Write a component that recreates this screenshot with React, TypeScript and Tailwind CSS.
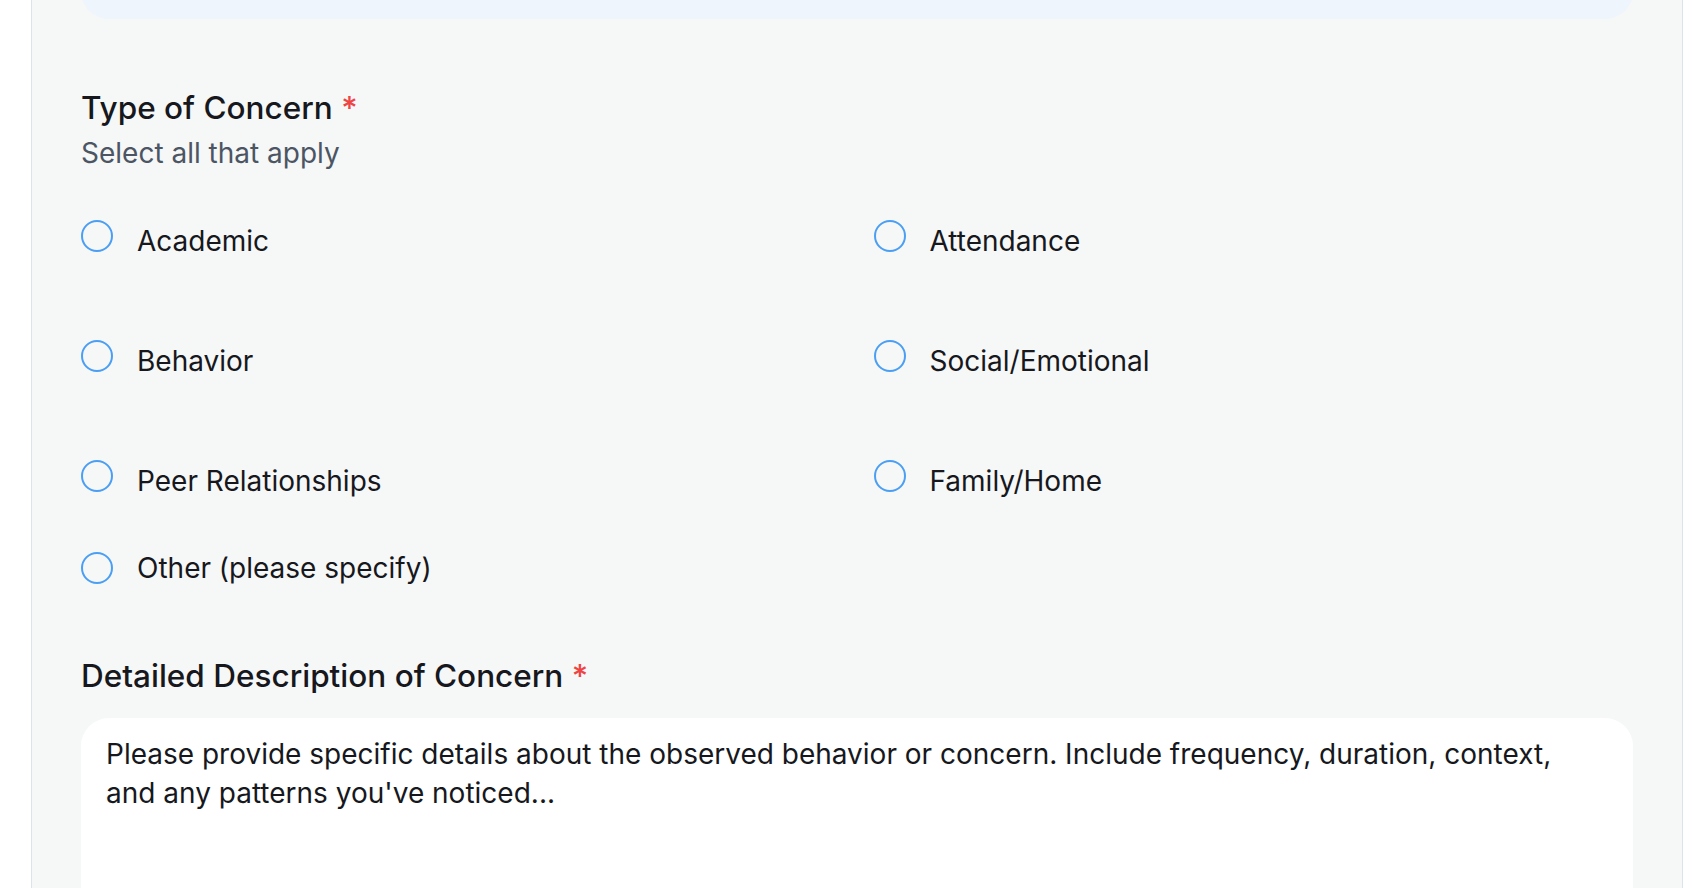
import { useState } from "react";

const OPTIONS: string[] = [
  "Academic",
  "Attendance",
  "Behavior",
  "Social/Emotional",
  "Peer Relationships",
  "Family/Home",
];

function Radio({ checked }: { checked: boolean }) {
  return (
    <span
      className={
        "block w-[32px] h-[32px] shrink-0 rounded-full border-2 border-[#4a9ff5] " +
        (checked ? "bg-[#4a9ff5]" : "bg-transparent")
      }
    />
  );
}

export default function App() {
  const [picked, setPicked] = useState<string[]>([]);

  const toggle = (name: string) =>
    setPicked((p) => (p.includes(name) ? p.filter((x) => x !== name) : [...p, name]));

  return (
    <div
      className="w-full h-[888px] bg-white flex overflow-hidden text-[#16181d]"
      style={{ fontFamily: "Inter, 'Noto Sans', sans-serif" }}
    >
      <div className="ml-[31px] w-[1652px] h-[888px] shrink-0 border-x border-[#dde3ea] bg-[#f6f7f7] px-[49px] overflow-hidden">
        {/* previous section (scrolled out of view) */}
        <div className="h-[120px] -mt-[101px] rounded-[28px] bg-[#eef5fd]" />

        {/* Type of Concern */}
        <div className="mt-[69px]">
          <h3 className="text-[31.5px] leading-[40px] font-medium">
            Type of Concern <span className="text-[#ef4444]">*</span>
          </h3>
          <p className="mt-[7px] text-[28px] leading-[36px] text-[#4b5563]">
            Select all that apply
          </p>
        </div>

        <div className="mt-[49px] grid grid-cols-2 gap-x-[33px] gap-y-[79px]">
          {OPTIONS.map((o) => (
            <label
              key={o}
              className="flex items-start gap-[24px] cursor-pointer"
              onClick={() => toggle(o)}
            >
              <Radio checked={picked.includes(o)} />
              <span className="mt-[1px] text-[28px] leading-[40px]">{o}</span>
            </label>
          ))}
        </div>

        <label
          className="mt-[47px] flex items-center gap-[24px] cursor-pointer"
          onClick={() => toggle("Other")}
        >
          <Radio checked={picked.includes("Other")} />
          <span className="text-[28px] leading-[40px]">Other (please specify)</span>
        </label>

        {/* Detailed description */}
        <h3 className="mt-[68px] text-[31.5px] leading-[40px] font-medium">
          Detailed Description of Concern <span className="text-[#ef4444]">*</span>
        </h3>
        <div className="mt-[22px] h-[240px] rounded-[28px] bg-white px-[25px] pt-[17px] text-[28px] leading-[39px] text-[#16181d]">
          Please provide specific details about the observed behavior or concern. Include
          frequency, duration, context,
          <br />
          and any patterns you've noticed...
        </div>
      </div>
    </div>
  );
}
